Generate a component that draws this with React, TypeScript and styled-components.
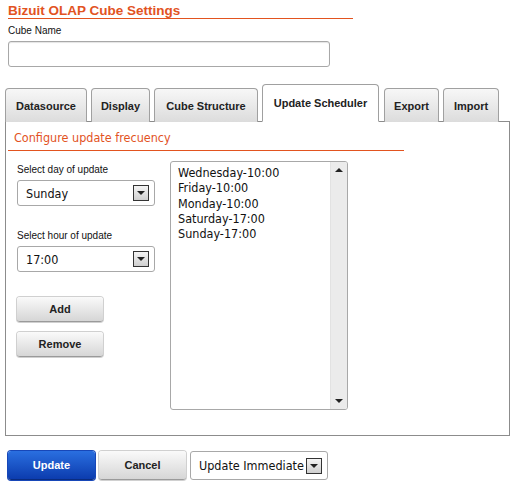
import styled, { createGlobalStyle } from 'styled-components'

const GlobalStyle = createGlobalStyle`
  body {
    margin: 0;
    background: #ffffff;
    font-family: "DejaVu Sans Condensed", "DejaVu Sans", Verdana, sans-serif;
    color: #111;
  }
`

const orange = '#e2531f'

const Page = styled.div`
  width: 514px;
  height: 486px;
  padding: 3px 0 0 0;
  box-sizing: border-box;
`

const Title = styled.h1`
  margin: 0 0 0 8px;
  width: 345px;
  font-family: "Liberation Sans", Arial, sans-serif;
  font-size: 13.5px;
  font-weight: bold;
  line-height: 15px;
  color: ${orange};
  border-bottom: 1px solid ${orange};
`

const FieldLabel = styled.div`
  font-family: "Liberation Sans", Arial, sans-serif;
  font-size: 10px;
  line-height: 12px;
  margin: ${(p: { top: number }) => p.top}px 0 4px 0;
`

const TextInput = styled.input`
  display: block;
  margin-left: 8px;
  width: 322px;
  height: 26px;
  box-sizing: border-box;
  border: 1px solid #a8a8a8;
  border-radius: 3px;
  box-shadow: inset 0 1px 1px #e4e4e4;
`

const NameBlock = styled.div`
  padding-left: 8px;
`

const TabBar = styled.div`
  display: flex;
  align-items: flex-end;
  gap: 4px;
  margin: 17px 0 0 5px;
  height: 38px;
  position: relative;
  z-index: 1;
`

const Tab = styled.div<{ active?: boolean; w: number }>`
  width: ${(p) => p.w}px;
  box-sizing: border-box;
  height: ${(p) => (p.active ? 38 : 34)}px;
  margin-right: ${(p) => (p.active ? 1 : 0)}px;
  display: flex;
  align-items: center;
  justify-content: center;
  font-family: "Liberation Sans", Arial, sans-serif;
  font-weight: bold;
  font-size: 11px;
  color: #222;
  border: 1px solid #a0a0a0;
  border-bottom: ${(p) => (p.active ? '1px solid #ffffff' : 'none')};
  border-radius: 4px 4px 0 0;
  background: ${(p) =>
    p.active ? '#ffffff' : 'linear-gradient(#f7f7f7, #dcdcdc)'};
  padding-top: ${(p) => (p.active ? 0 : 1)}px;
`

const Panel = styled.div`
  margin: -1px 0 0 5px;
  width: 505px;
  height: 315px;
  box-sizing: border-box;
  border: 1px solid #8c8c8c;
  padding: 8px 0 0 2px;
`

const SectionTitle = styled.div`
  width: 390px;
  padding: 0 0 5px 6px;
  font-size: 12.5px;
  line-height: 15px;
  color: ${orange};
  border-bottom: 1px solid ${orange};
`

const Body = styled.div`
  display: flex;
  gap: 15px;
  padding: 10px 0 0 9px;
`

const LeftCol = styled.div`
  width: 138px;
  display: flex;
  flex-direction: column;
`

const SelectBox = styled.div<{ w: number; h: number }>`
  width: ${(p) => p.w}px;
  height: ${(p) => p.h}px;
  box-sizing: border-box;
  border: 1px solid #a8a8a8;
  border-radius: 3px;
  display: flex;
  align-items: center;
  justify-content: space-between;
  padding: 0 5px 0 8px;
  font-size: 12.5px;
  white-space: nowrap;
  background: #fff;
`

const ArrowBox = styled.span`
  width: 16px;
  height: 16px;
  flex-shrink: 0;
  box-sizing: border-box;
  border: 1px solid #333;
  background: linear-gradient(#f4f4f4, #cfcfcf);
  display: flex;
  align-items: center;
  justify-content: center;
`

const Triangle = styled.span<{ up?: boolean }>`
  width: 0;
  height: 0;
  border-left: 4px solid transparent;
  border-right: 4px solid transparent;
  ${(p) => (p.up ? 'border-bottom' : 'border-top')}: 4px solid #222;
`

const GreyButton = styled.button<{ w: number; h: number }>`
  width: ${(p) => p.w}px;
  height: ${(p) => p.h}px;
  border: none;
  border-bottom: 1px solid #9a9a9a;
  border-radius: 3px;
  background: linear-gradient(#fafafa, #d6d6d6);
  box-shadow: 0 0 0 1px #d0d0d0;
  font-family: "Liberation Sans", Arial, sans-serif;
  font-weight: bold;
  font-size: 11px;
  color: #222;
  padding: 0;
`

const BlueButton = styled(GreyButton)`
  background: linear-gradient(#2a6fe0, #0c3cae);
  border-bottom: 1px solid #0a2c80;
  box-shadow: 0 0 0 1px #1747b8;
  color: #fff;
`

const ListBox = styled.div`
  width: 178px;
  height: 249px;
  box-sizing: border-box;
  border: 1px solid #a8a8a8;
  border-radius: 3px;
  display: flex;
  overflow: hidden;
`

const Items = styled.div`
  flex: 1;
  padding: 3px 0 0 7px;
  font-size: 12.5px;
  line-height: 15.3px;
`

const ScrollBar = styled.div`
  width: 16px;
  background: #ebebeb;
  border-left: 1px solid #e2e2e2;
  display: flex;
  flex-direction: column;
  justify-content: space-between;
  align-items: center;
  padding: 6px 0;
`

const Footer = styled.div`
  display: flex;
  gap: 4px;
  margin: 15px 0 0 8px;
`

const Gap = styled.div<{ h: number }>`
  height: ${(p) => p.h}px;
  flex-shrink: 0;
`

const tabs = [
  { label: 'Datasource', w: 82 },
  { label: 'Display', w: 59 },
  { label: 'Cube Structure', w: 104 },
  { label: 'Update Scheduler', w: 117, active: true },
  { label: 'Export', w: 55 },
  { label: 'Import', w: 56 },
]

const schedules = [
  'Wednesday-10:00',
  'Friday-10:00',
  'Monday-10:00',
  'Saturday-17:00',
  'Sunday-17:00',
]

function Select({ value, w, h }: { value: string; w: number; h: number }) {
  return (
    <SelectBox w={w} h={h}>
      <span>{value}</span>
      <ArrowBox>
        <Triangle />
      </ArrowBox>
    </SelectBox>
  )
}

export default function App() {
  return (
    <Page>
      <GlobalStyle />
      <Title>Bizuit OLAP Cube Settings</Title>
      <NameBlock>
        <FieldLabel top={6}>Cube Name</FieldLabel>
      </NameBlock>
      <TextInput type="text" />

      <TabBar>
        {tabs.map((t) => (
          <Tab key={t.label} w={t.w} active={t.active}>
            {t.label}
          </Tab>
        ))}
      </TabBar>

      <Panel>
        <SectionTitle>Configure update frecuency</SectionTitle>
        <Body>
          <LeftCol>
            <FieldLabel top={3}>Select day of update</FieldLabel>
            <Select value="Sunday" w={138} h={26} />
            <Gap h={24} />
            <FieldLabel top={0}>Select hour of update</FieldLabel>
            <Select value="17:00" w={138} h={26} />
            <Gap h={25} />
            <GreyButton w={86} h={25}>Add</GreyButton>
            <Gap h={10} />
            <GreyButton w={86} h={25}>Remove</GreyButton>
          </LeftCol>
          <ListBox>
            <Items>
              {schedules.map((s) => (
                <div key={s}>{s}</div>
              ))}
            </Items>
            <ScrollBar>
              <Triangle up />
              <Triangle />
            </ScrollBar>
          </ListBox>
        </Body>
      </Panel>

      <Footer>
        <BlueButton w={87} h={29}>Update</BlueButton>
        <GreyButton w={87} h={29}>Cancel</GreyButton>
        <Select value="Update Immediate" w={138} h={29} />
      </Footer>
    </Page>
  )
}
